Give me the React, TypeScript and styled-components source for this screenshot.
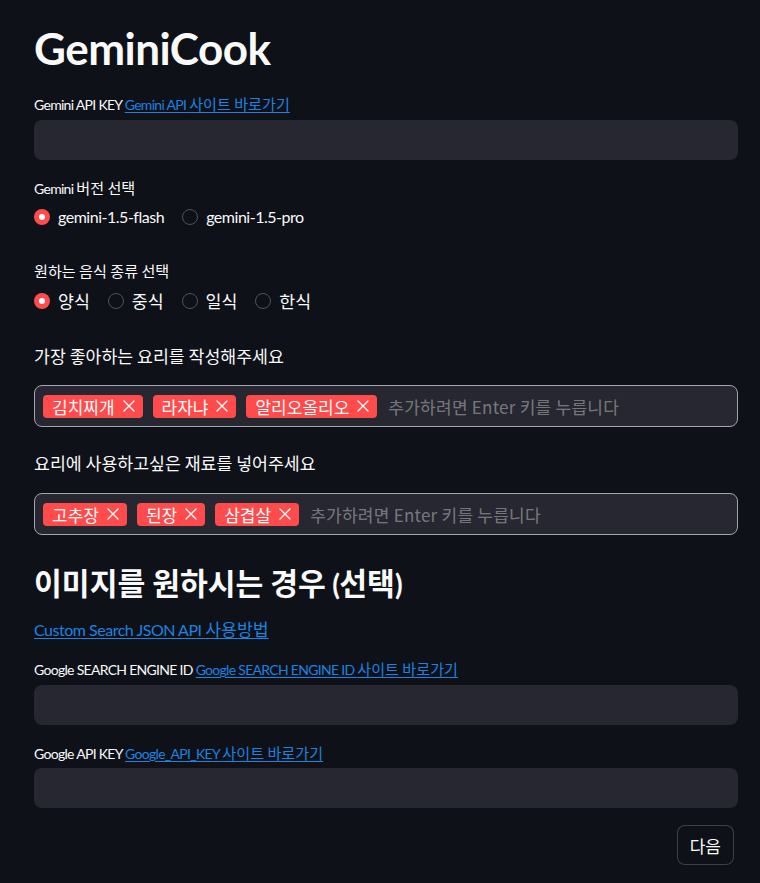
import React from "react";
import styled, { createGlobalStyle } from "styled-components";

const GlobalStyle = createGlobalStyle`
  html, body {
    margin: 0;
    padding: 0;
    background: #0e1117;
  }
  body {
    color: #fafafa;
    font-family: "Lato", "Noto Sans CJK KR", sans-serif;
  }
  * { box-sizing: border-box; }
`;

/* Hangul runs use a slightly larger CJK face (the reference falls back to a wide Korean font). */
const Ko = styled.span`
  font-family: "Noto Sans CJK KR", sans-serif;
  font-size: 1.08em;
  letter-spacing: 0;
`;

const HANGUL = /[\u3130-\u318F\uAC00-\uD7AF]+(?:\s+[\u3130-\u318F\uAC00-\uD7AF]+)*/g;

const T = ({ children }: { children: string }) => {
  const parts: React.ReactNode[] = [];
  let last = 0;
  let m: RegExpExecArray | null;
  HANGUL.lastIndex = 0;
  while ((m = HANGUL.exec(children)) !== null) {
    if (m.index > last) parts.push(children.slice(last, m.index));
    parts.push(<Ko key={m.index}>{m[0]}</Ko>);
    last = m.index + m[0].length;
  }
  if (last < children.length) parts.push(children.slice(last));
  return <>{parts}</>;
};

const Main = styled.main`
  display: flex;
  flex-direction: column;
  width: 760px;
  min-height: 883px;
  padding: 0 22px 0 34px;
`;

const Title = styled.h1`
  margin: 22px 0 0;
  height: 52px;
  font-size: 44px;
  font-weight: 700;
  line-height: 52px;
  letter-spacing: -0.5px;
`;

const SubHeader = styled.h2<{ $mt: number }>`
  margin: ${(p) => p.$mt}px 0 0;
  height: 40px;
  font-size: 28px;
  font-weight: 700;
  line-height: 40px;
  letter-spacing: -0.02em;
  white-space: nowrap;
`;

const Label = styled.div<{ $mt: number; $size?: number }>`
  margin-top: ${(p) => p.$mt}px;
  height: ${(p) => (p.$size ? 24 : 20)}px;
  font-size: ${(p) => p.$size ?? 14}px;
  line-height: ${(p) => (p.$size ? 24 : 20)}px;
  letter-spacing: -0.05em;
  color: #fafafa;
  white-space: nowrap;
`;

const Link = styled.a`
  color: #1c83e1;
  text-decoration: underline;
  text-underline-offset: 2px;
  cursor: pointer;
`;

const LinkLine = styled.div<{ $mt: number }>`
  margin-top: ${(p) => p.$mt}px;
  height: 20px;
  font-size: 16px;
  line-height: 20px;
  letter-spacing: -0.03em;
  white-space: nowrap;
`;

const TextInput = styled.input<{ $mt: number }>`
  margin-top: ${(p) => p.$mt}px;
  width: 100%;
  height: 40px;
  border: none;
  border-radius: 8px;
  background: #262730;
  color: #fafafa;
  padding: 0 12px;
  outline: none;
  font-family: inherit;
  font-size: 16px;
`;

const RadioRow = styled.div<{ $mt: number }>`
  margin-top: ${(p) => p.$mt}px;
  display: flex;
  align-items: center;
  height: 24px;
  gap: 18px;
`;

const RadioItem = styled.label`
  display: flex;
  align-items: center;
  gap: 8px;
  height: 24px;
  font-size: 16px;
  line-height: 24px;
  letter-spacing: -0.03em;
  white-space: nowrap;
`;

const RadioDot = styled.span<{ $on: boolean }>`
  width: 16px;
  height: 16px;
  border-radius: 50%;
  background: ${(p) => (p.$on ? "#ff4b4b" : "transparent")};
  border: ${(p) => (p.$on ? "none" : "1px solid #50525c")};
  display: flex;
  align-items: center;
  justify-content: center;
  &::after {
    content: "";
    display: ${(p) => (p.$on ? "block" : "none")};
    width: 6px;
    height: 6px;
    border-radius: 50%;
    background: #ffffff;
  }
`;

const MultiBox = styled.div<{ $mt: number }>`
  margin-top: ${(p) => p.$mt}px;
  display: flex;
  align-items: center;
  gap: 10px;
  height: 42px;
  padding: 0 8px;
  border: 1px solid #a3a5ad;
  border-radius: 8px;
  background: #262730;
`;

const Tag = styled.span`
  display: flex;
  align-items: center;
  gap: 8px;
  height: 23px;
  padding: 0 8px 0 9px;
  border-radius: 4px;
  background: #ff4b4b;
  color: #ffffff;
  font-family: "Noto Sans CJK KR", sans-serif;
  font-size: 17px;
  line-height: 23px;
  white-space: nowrap;
`;

const Placeholder = styled.span`
  margin-left: 1px;
  font-family: "Noto Sans CJK KR", sans-serif;
  font-size: 17px;
  letter-spacing: 0.25px;
  color: rgba(250, 250, 250, 0.4);
  white-space: nowrap;
`;

const ButtonRow = styled.div`
  margin-top: 17px;
  display: flex;
  justify-content: flex-end;
  padding-right: 4px;
`;

const Button = styled.button`
  height: 40px;
  padding: 0 12px;
  border: 1px solid rgba(250, 250, 250, 0.2);
  border-radius: 8px;
  background: #0e1117;
  color: #fafafa;
  font-family: "Noto Sans CJK KR", sans-serif;
  font-size: 17px;
`;

const XIcon = () => (
  <svg width="12" height="12" viewBox="0 0 12 12" fill="none">
    <path d="M1 1 L11 11 M11 1 L1 11" stroke="#ffffff" strokeWidth="1.4" strokeLinecap="round" />
  </svg>
);

const Radio = ({ label, on }: { label: string; on?: boolean }) => (
  <RadioItem>
    <RadioDot $on={!!on} />
    <span>
      <T>{label}</T>
    </span>
  </RadioItem>
);

const Multi = ({ tags, mt }: { tags: string[]; mt: number }) => (
  <MultiBox $mt={mt}>
    {tags.map((t) => (
      <Tag key={t}>
        {t}
        <XIcon />
      </Tag>
    ))}
    <Placeholder>추가하려면 Enter 키를 누릅니다</Placeholder>
  </MultiBox>
);

export default function App() {
  return (
    <>
      <GlobalStyle />
      <Main>
        <Title>GeminiCook</Title>
        <Label $mt={19}>
          Gemini API KEY{" "}
          <Link>
            <T>Gemini API 사이트 바로가기</T>
          </Link>
        </Label>
        <TextInput $mt={7} />
        <Label $mt={17}>
          <T>Gemini 버전 선택</T>
        </Label>
        <RadioRow $mt={8}>
          <Radio label="gemini-1.5-flash" on />
          <Radio label="gemini-1.5-pro" />
        </RadioRow>
        <Label $mt={31}>
          <T>원하는 음식 종류 선택</T>
        </Label>
        <RadioRow $mt={9}>
          <Radio label="양식" on />
          <Radio label="중식" />
          <Radio label="일식" />
          <Radio label="한식" />
        </RadioRow>
        <Label $mt={31} $size={16}>
          <T>가장 좋아하는 요리를 작성해주세요</T>
        </Label>
        <Multi mt={17} tags={["김치찌개", "라자냐", "알리오올리오"]} />
        <Label $mt={24} $size={16}>
          <T>요리에 사용하고싶은 재료를 넣어주세요</T>
        </Label>
        <Multi mt={18} tags={["고추장", "된장", "삼겹살"]} />
        <SubHeader $mt={27}>
          <T>이미지를 원하시는 경우 (선택)</T>
        </SubHeader>
        <LinkLine $mt={17}>
          <Link>
            <T>Custom Search JSON API 사용방법</T>
          </Link>
        </LinkLine>
        <Label $mt={19}>
          Google SEARCH ENGINE ID{" "}
          <Link>
            <T>Google SEARCH ENGINE ID 사이트 바로가기</T>
          </Link>
        </Label>
        <TextInput $mt={7} />
        <Label $mt={17}>
          Google API KEY{" "}
          <Link>
            <T>Google_API_KEY 사이트 바로가기</T>
          </Link>
        </Label>
        <TextInput $mt={6} />
        <ButtonRow>
          <Button>다음</Button>
        </ButtonRow>
      </Main>
    </>
  );
}
